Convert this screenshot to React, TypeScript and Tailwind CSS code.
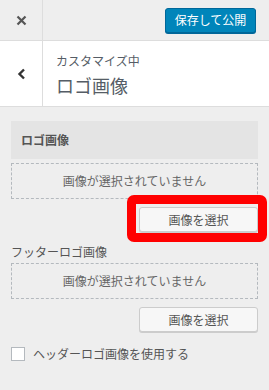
import React from "react";

const font = { fontFamily: '"Noto Sans CJK JP", "Noto Sans", sans-serif' };

function Placeholder() {
  return (
    <div className="flex h-[36px] items-center justify-center border border-dashed border-[#b4b9be] text-[12px] text-[#666]">
      画像が選択されていません
    </div>
  );
}

function SelectButton({ highlight }: { highlight?: boolean }) {
  return (
    <div className="flex justify-end">
      <div className="relative">
        {highlight && (
          <div className="absolute -left-[12px] -right-[9px] -top-[12px] -bottom-[10px] rounded-[7px] border-[9px] border-[#ff0000]" />
        )}
        <button className="relative flex h-[25px] w-[119px] items-center justify-center rounded-[3px] border border-[#ccc] bg-[#f7f7f7] text-[12px] text-[#555] shadow-[0_1px_0_#ccc]">
          画像を選択
        </button>
      </div>
    </div>
  );
}

export default function App() {
  return (
    <div className="h-[390px] w-[269px] overflow-hidden bg-[#eee]" style={font}>
      {/* top bar */}
      <div className="flex h-[41px] items-center border-b border-[#ddd] bg-[#eee]">
        <div className="flex h-full w-[43px] items-center justify-center border-r border-[#ddd]">
          <svg width="11" height="11" viewBox="0 0 11 11">
            <path d="M1.5 1.5 L9.5 9.5 M9.5 1.5 L1.5 9.5" stroke="#555" strokeWidth="2.2" />
          </svg>
        </div>
        <button className="ml-auto mr-[13px] flex h-[25px] w-[91px] items-center justify-center rounded-[3px] border border-[#006799] bg-[#0085ba] text-[12px] text-white shadow-[0_1px_0_#006799]">
          保存して公開
        </button>
      </div>

      {/* section title */}
      <div className="flex h-[66px] border-b border-[#ddd] bg-white">
        <div className="flex w-[43px] items-center justify-center border-r border-[#ddd]">
          <svg width="9" height="12" viewBox="0 0 9 12">
            <path d="M7 1.5 L2.5 6 L7 10.5" stroke="#333" strokeWidth="2.4" fill="none" />
          </svg>
        </div>
        <div className="flex flex-col pl-[13px] pt-[10px]">
          <span className="text-[12px] leading-[19px] text-[#555d66]">カスタマイズ中</span>
          <span className="text-[18px] leading-[31px] text-[#555d66]">ロゴ画像</span>
        </div>
      </div>

      {/* controls */}
      <div className="px-[11px] pt-[14px]">
        <div className="flex h-[38px] items-center bg-[#e4e4e4] pl-[10px] text-[12px] font-bold text-[#555]">
          ロゴ画像
        </div>
        <div className="mt-[4px]">
          <Placeholder />
        </div>
        <div className="mt-[8px]">
          <SelectButton highlight />
        </div>

        <div className="mt-[10px] text-[12px] leading-[20px] text-[#555]">フッターロゴ画像</div>
        <div className="mt-[1px]">
          <Placeholder />
        </div>
        <div className="mt-[8px]">
          <SelectButton />
        </div>

        <label className="mt-[13px] flex items-center gap-[8px] text-[12px] text-[#555]">
          <span className="h-[14px] w-[14px] border border-[#b4b9be] bg-white" />
          ヘッダーロゴ画像を使用する
        </label>
      </div>
    </div>
  );
}
